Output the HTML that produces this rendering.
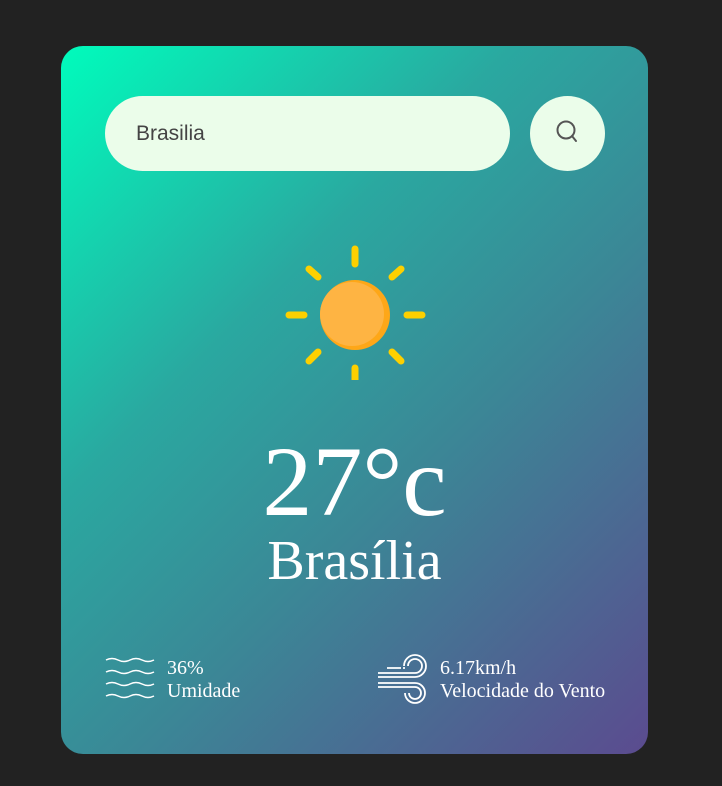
<!DOCTYPE html>
<html><head><style>
body{margin:0;background:#222;width:722px;height:786px;position:relative;font-family:"Liberation Serif",serif;overflow:hidden}
.card{position:absolute;left:61px;top:46px;width:587px;height:708px;border-radius:22px;background:linear-gradient(135deg,#00fcbc 0%,#2aa8a0 35%,#3b8796 60%,#5b4b8f 100%)}
.inp{position:absolute;left:44px;top:50px;width:405px;height:75px;border-radius:38px;background:#ebfdea;font-family:"Liberation Sans",sans-serif;font-size:21px;color:#444;line-height:75px;padding-left:31px;box-sizing:border-box}
.btn{position:absolute;left:469px;top:50px;width:75px;height:75px;border-radius:50%;background:#ebfdea}
.t{position:absolute;left:0;width:587px;text-align:center;color:#fff}
.small{position:absolute;color:#fff;font-size:20px;line-height:23px}
</style></head><body>
<div class="card">
<div class="inp">Brasilia</div>
<div class="btn"><svg width="75" height="75"><circle cx="36" cy="34" r="8.5" fill="none" stroke="#555" stroke-width="2"/><line x1="42" y1="40" x2="46" y2="45" stroke="#555" stroke-width="2" stroke-linecap="round"/></svg></div>
<svg style="position:absolute;left:209px;top:184px" width="170" height="150">
<g stroke="#fdd000" stroke-width="7" stroke-linecap="round">
<line x1="85" y1="19" x2="85" y2="34"/><line x1="85" y1="138" x2="85" y2="150"/>
<line x1="19" y1="85" x2="34" y2="85"/><line x1="137" y1="85" x2="152" y2="85"/>
<line x1="39" y1="39" x2="48" y2="47"/><line x1="131" y1="39" x2="122" y2="47"/>
<line x1="39" y1="131" x2="48" y2="122"/><line x1="131" y1="131" x2="122" y2="122"/>
</g>
<circle cx="85" cy="85" r="35" fill="#fea718"/>
<circle cx="82" cy="84" r="32" fill="#feb443"/>
</svg>
<div class="t" style="top:381px;font-size:100px;line-height:110px">27°c</div>
<div class="t" style="top:483px;font-size:56px;line-height:64px">Brasília</div>
<svg style="position:absolute;left:44px;top:610px" width="52" height="50" fill="none" stroke="#fff" stroke-width="1.5">
<path d="M1 4q6-3 12 0t12 0t12 0t12 0"/><path d="M1 16q6-3 12 0t12 0t12 0t12 0"/><path d="M1 28q6-3 12 0t12 0t12 0t12 0"/><path d="M1 40q6-3 12 0t12 0t12 0t12 0"/>
</svg>
<div class="small" style="left:106px;top:611px">36%<br>Umidade</div>
<svg style="position:absolute;left:316px;top:608px" width="52" height="52" fill="none" stroke="#fff" stroke-width="1.8">
<path d="M1 23h37a11 11 0 1 0 -11 -11"/><path d="M1 19h37a7 7 0 1 0 -7 -7"/>
<path d="M1 29h37a10 10 0 1 1 -10 10"/><path d="M1 33h37a6 6 0 1 1 -6 6"/>
<path d="M10 14h14M26 14h2"/>
</svg>
<div class="small" style="left:379px;top:611px">6.17km/h<br>Velocidade do Vento</div>
</div>
</body></html>
